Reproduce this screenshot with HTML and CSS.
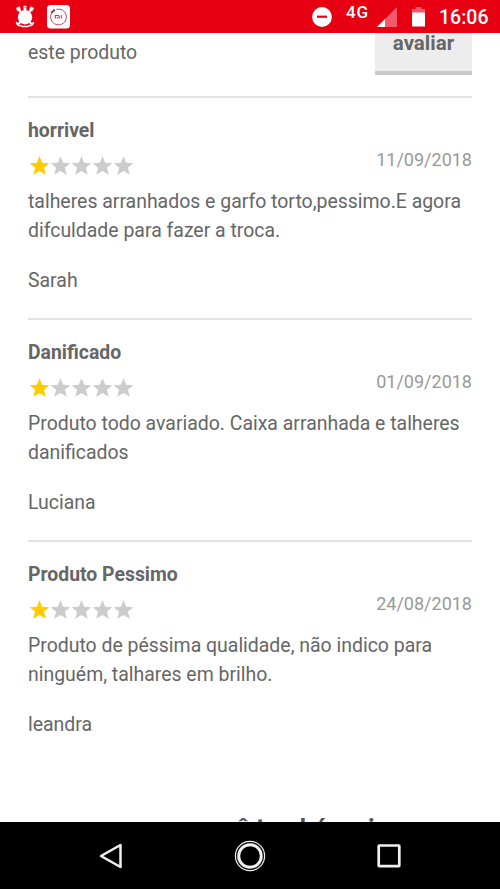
FILE: index.html
```
<!DOCTYPE html>
<html lang="pt-BR">
<head>
<meta charset="utf-8">
<meta name="viewport" content="width=device-width">
<title>Avaliações</title>
<link rel="stylesheet" href="styles.css">
</head>
<body>
<svg width="0" height="0" class="defs" aria-hidden="true">
  <defs>
    <path id="star" d="M10.5 0.3 13.2 6.800 20.3 7.3 14.9 11.8 16.8 18.7 10.5 14.9 4.2 18.7 6.1 11.8 0.7 7.3 7.800 6.800Z"/>
    <g id="rating">
      <use href="#star" class="on"/>
      <use href="#star" x="21"/>
      <use href="#star" x="42"/>
      <use href="#star" x="63"/>
      <use href="#star" x="84"/>
    </g>
  </defs>
</svg>
<header class="status">
  <svg class="crest" width="20" height="24" viewBox="0 0 20 24">
    <g fill="none" stroke="#fff" stroke-linecap="round">
      <path d="M3.5 4.5 16.5 19M16.500 4.500 3.500 19" stroke-width="2"/>
      <path d="M1.500 3 4.500 1.800 5.500 5 3 6ZM18.500 3 15.500 1.800 14.500 5 17 6Z" fill="#fff" stroke-width=".6"/>
      <path d="M1.500 17.500 Q3 21.500 6 20.500 M18.500 17.500 Q17 21.500 14 20.500 M7 21.500H13" stroke-width="1.600"/>
    </g>
    <circle cx="10" cy="12.200" r="7.200" fill="#fff"/>
    <path d="M8.600 5.500V.8h2.800V5.500Z" fill="#fff"/>
    <path d="M9.500 2.500h1.200" stroke="#e60012" stroke-width=".7"/>
  </svg>
  <svg class="app" width="23" height="24" viewBox="0 0 23 24">
    <rect width="23" height="23.500" rx="3.500" fill="#fff"/>
    <circle cx="11.500" cy="12" r="7.900" fill="none" stroke="#aa4b73" stroke-width=".9" stroke-dasharray="43 6" transform="rotate(-105 11.500 12)"/>
    <path d="M4.200 8 7.800 4.500" stroke="#a32c50" stroke-width="1.800"/>
    <path d="M8.300 13.500V10.500h2.900q1 0 1 1V13.500M10.300 13.500V12M14.300 10V13.500" fill="none" stroke="#cf3450" stroke-width="1.100"/>
  </svg>
  <svg class="dnd" width="20" height="20" viewBox="0 0 20 20">
    <circle cx="10" cy="10" r="9.900" fill="#fff"/>
    <path d="M5 9.700h10" stroke="#e60012" stroke-width="2.200"/>
  </svg>
  <span class="network">4G</span>
  <svg class="signal" width="20" height="20" viewBox="0 0 20 20">
    <path d="M0 20 20 0V20Z" fill="#f4596b"/>
    <path d="M0 20 8 12V20Z" fill="#fff"/>
  </svg>
  <svg class="battery" width="13" height="20" viewBox="0 0 13 20">
    <path d="M3.500 0h6v2H13v4H0V2h3.500Z" fill="#f4596b"/>
    <path d="M0 5.500h13V19.500H0Z" fill="#fff"/>
  </svg>
  <span class="clock">16:06</span>
</header>

<main class="page">
  <div class="intro">
    <span class="product">este produto</span>
    <button class="rate">avaliar</button>
  </div>

  <article class="review">
    <h3>horrivel</h3>
    <div class="meta">
      <svg class="stars" width="106" height="19"><use href="#rating"/></svg>
      <time>11/09/2018</time>
    </div>
    <p>talheres arranhados e garfo torto,pessimo.E agora<br>difculdade para fazer a troca.</p>
    <div class="author">Sarah</div>
  </article>

  <article class="review">
    <h3>Danificado</h3>
    <div class="meta">
      <svg class="stars" width="106" height="19"><use href="#rating"/></svg>
      <time>01/09/2018</time>
    </div>
    <p>Produto todo avariado. Caixa arranhada e talheres<br>danificados</p>
    <div class="author">Luciana</div>
  </article>

  <article class="review">
    <h3>Produto Pessimo</h3>
    <div class="meta">
      <svg class="stars" width="106" height="19"><use href="#rating"/></svg>
      <time>24/08/2018</time>
    </div>
    <p>Produto de péssima qualidade, não indico para<br>ninguém, talhares em brilho.</p>
    <div class="author">leandra</div>
  </article>

  <h2 class="related">você também viu</h2>
</main>

<nav class="keys">
  <svg width="30" height="32" viewBox="0 0 30 32">
    <path d="M5 16 24.500 5V27Z" fill="none" stroke="#f0f0f0" stroke-width="2.500" stroke-linejoin="round"/>
  </svg>
  <svg width="32" height="32" viewBox="0 0 32 32">
    <circle cx="16" cy="16" r="14.600" fill="none" stroke="#f0f0f0" stroke-width="1.200"/>
    <circle cx="16" cy="16" r="11.300" fill="none" stroke="#f0f0f0" stroke-width="3"/>
  </svg>
  <svg width="30" height="32" viewBox="0 0 30 32">
    <rect x="4.700" y="5.500" width="20.600" height="20.600" rx=".6" fill="none" stroke="#f0f0f0" stroke-width="2.700"/>
  </svg>
</nav>
</body>
</html>
```
FILE: styles.css
```
* { box-sizing: border-box; }
body {
  margin: 0;
  height: 889px;
  display: flex;
  flex-direction: column;
  overflow: hidden;
  background: #fff;
  color: #666;
  font-family: Roboto, "Liberation Sans", sans-serif;
  font-size: 19.44px;
  line-height: 29px;
}
.defs { display: block; height: 0; flex: none; }
.status {
  flex: none;
  height: 33px;
  display: flex;
  align-items: flex-start;
  background: #e60012;
  color: #fff;
  padding: 5px 11px 0 15px;
}
.status svg { flex: none; }
.app { margin-left: 12px; }
.dnd { margin: 2px 0 0 auto; }
.network {
  margin: -3px 0 0 14px;
  width: 23px;
  font-size: 17px;
  line-height: 20px;
  font-weight: 500;
  letter-spacing: 0.8px;
}
.signal { margin: 2px 0 0 8px; }
.battery { margin: 2px 0 0 15px; }
.clock {
  margin-left: 14px;
  width: 50px;
  font-size: 19.5px;
  line-height: 25px;
  font-weight: 500;
  white-space: nowrap;
}
.page {
  flex: none;
  height: 789px;
  overflow: hidden;
  padding: 0 28px;
}
.intro {
  height: 63px;
  display: flex;
  justify-content: space-between;
  align-items: flex-start;
}
.product { margin-top: 5px; }
.rate {
  width: 97px;
  height: 42px;
  padding: 0 0 18px;
  border: 0;
  border-bottom: 4px solid #c9c9c9;
  background: #ededed;
  color: #666;
  font: bold 20.5px/20px Roboto, sans-serif;
}
.review {
  height: 222px;
  border-top: 2px solid #e2e2e2;
  padding-top: 18px;
}
.review h3 {
  margin: 0;
  font-size: 19.4px;
  font-weight: 700;
  line-height: 29px;
}
.meta {
  height: 42px;
  display: flex;
  justify-content: space-between;
  align-items: flex-start;
}
.stars { margin: 11px 0 0 1px; fill: #ccc; }
.on { fill: #fc0; }
time {
  font-size: 18px;
  color: #999;
}
.review p { margin: 0 0 21px; white-space: nowrap; }
.related {
  margin: 52px 0 0 169px;
  color: #555;
  font-size: 25px;
  line-height: 30px;
  white-space: nowrap;
}
.keys {
  flex: none;
  height: 67px;
  display: flex;
  justify-content: space-between;
  align-items: center;
  background: #000;
  padding: 0 96px 0 96px;
}
```
